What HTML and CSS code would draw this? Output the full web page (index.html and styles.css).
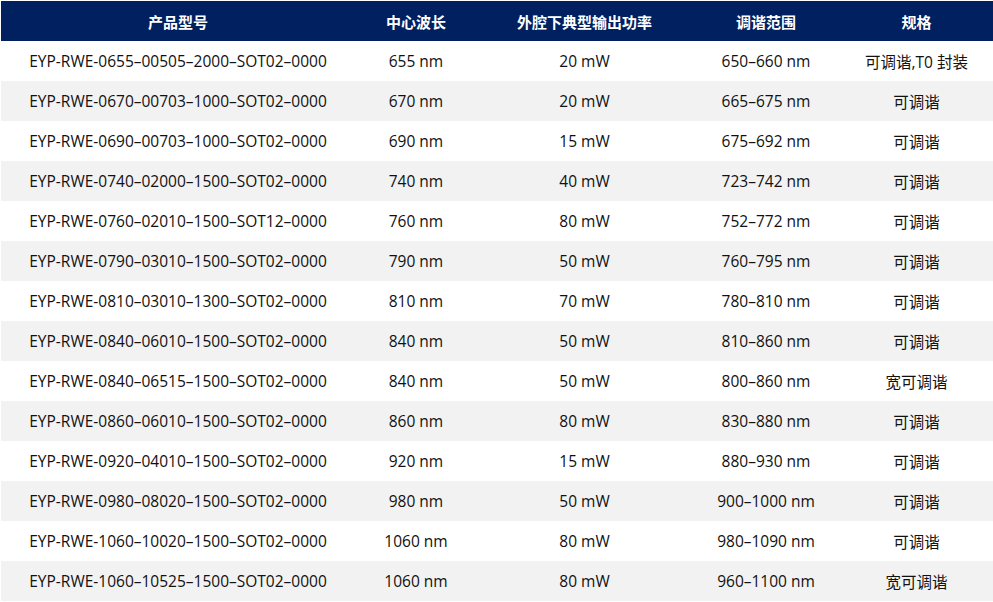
FILE: index.html
```html
<!DOCTYPE html>
<html lang="zh-CN">
<head>
<meta charset="utf-8">
<title>产品列表</title>
<link rel="stylesheet" href="styles.css">
</head>
<body>
<table class="spec-table">
  <colgroup>
    <col class="c1"><col class="c2"><col class="c3"><col class="c4"><col class="c5">
  </colgroup>
  <thead>
    <tr><th>产品型号</th><th>中心波长</th><th>外腔下典型输出功率</th><th>调谐范围</th><th>规格</th></tr>
  </thead>
  <tbody>
    <tr><td>EYP-RWE-0655–00505–2000–SOT02–0000</td><td>655 nm</td><td>20 mW</td><td>650–660 nm</td><td>可调谐,T0 封装</td></tr>
    <tr><td>EYP-RWE-0670–00703–1000–SOT02–0000</td><td>670 nm</td><td>20 mW</td><td>665–675 nm</td><td>可调谐</td></tr>
    <tr><td>EYP-RWE-0690–00703–1000–SOT02–0000</td><td>690 nm</td><td>15 mW</td><td>675–692 nm</td><td>可调谐</td></tr>
    <tr><td>EYP-RWE-0740–02000–1500–SOT02–0000</td><td>740 nm</td><td>40 mW</td><td>723–742 nm</td><td>可调谐</td></tr>
    <tr><td>EYP-RWE-0760–02010–1500–SOT12–0000</td><td>760 nm</td><td>80 mW</td><td>752–772 nm</td><td>可调谐</td></tr>
    <tr><td>EYP-RWE-0790–03010–1500–SOT02–0000</td><td>790 nm</td><td>50 mW</td><td>760–795 nm</td><td>可调谐</td></tr>
    <tr><td>EYP-RWE-0810–03010–1300–SOT02–0000</td><td>810 nm</td><td>70 mW</td><td>780–810 nm</td><td>可调谐</td></tr>
    <tr><td>EYP-RWE-0840–06010–1500–SOT02–0000</td><td>840 nm</td><td>50 mW</td><td>810–860 nm</td><td>可调谐</td></tr>
    <tr><td>EYP-RWE-0840–06515–1500–SOT02–0000</td><td>840 nm</td><td>50 mW</td><td>800–860 nm</td><td>宽可调谐</td></tr>
    <tr><td>EYP-RWE-0860–06010–1500–SOT02–0000</td><td>860 nm</td><td>80 mW</td><td>830–880 nm</td><td>可调谐</td></tr>
    <tr><td>EYP-RWE-0920–04010–1500–SOT02–0000</td><td>920 nm</td><td>15 mW</td><td>880–930 nm</td><td>可调谐</td></tr>
    <tr><td>EYP-RWE-0980–08020–1500–SOT02–0000</td><td>980 nm</td><td>50 mW</td><td>900–1000 nm</td><td>可调谐</td></tr>
    <tr><td>EYP-RWE-1060–10020–1500–SOT02–0000</td><td>1060 nm</td><td>80 mW</td><td>980–1090 nm</td><td>可调谐</td></tr>
    <tr><td>EYP-RWE-1060–10525–1500–SOT02–0000</td><td>1060 nm</td><td>80 mW</td><td>960–1100 nm</td><td>宽可调谐</td></tr>
  </tbody>
</table>
</body>
</html>
```

FILE: styles.css
```css
html, body {
  margin: 0;
  padding: 0;
  background: #ffffff;
}
body {
  padding: 1px 0 0 1px;
  font-family: "Open Sans", "Noto Sans CJK SC", sans-serif;
  color: #111111;
}
.spec-table {
  width: 992px;
  border-collapse: collapse;
  table-layout: fixed;
}
.c1 { width: 354px; }
.c2 { width: 122px; }
.c3 { width: 215px; }
.c4 { width: 148px; }
.c5 { width: 153px; }
.spec-table th {
  height: 40px;
  padding: 0;
  background: #002060;
  color: #ffffff;
  font-weight: 700;
  font-size: 15px;
  text-align: center;
  vertical-align: middle;
}
.spec-table td {
  height: 40px;
  padding: 0;
  font-size: 15.5px;
  text-align: center;
  vertical-align: middle;
  white-space: nowrap;
}
.spec-table tbody tr:nth-child(even) td {
  background: #f2f2f2;
}
```
